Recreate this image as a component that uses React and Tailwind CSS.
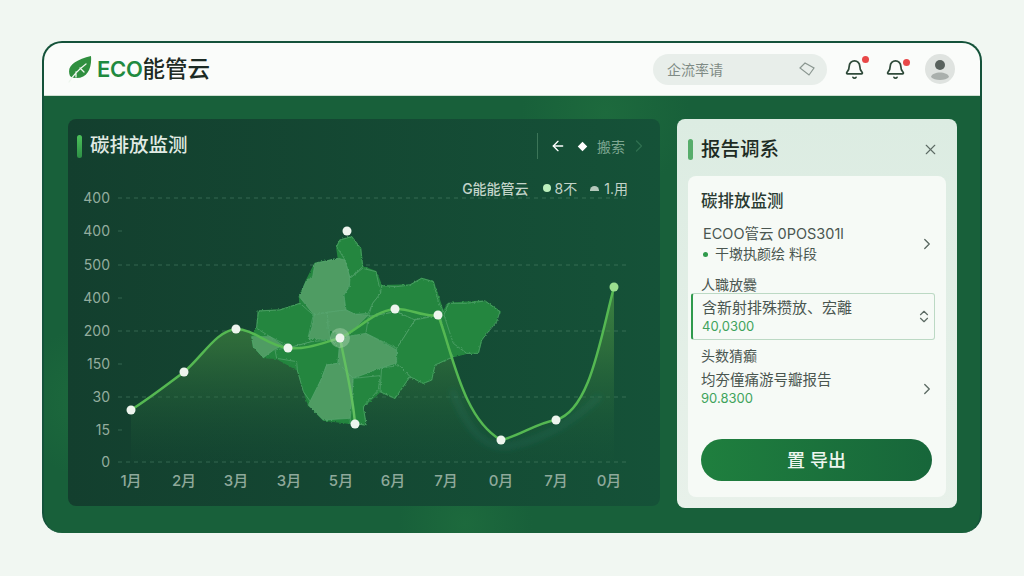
import { Bell, ChevronRight, ChevronUp, ChevronDown, X, ArrowLeft } from "lucide-react";

const cjk = "font-['Inter','Noto_Sans_CJK_SC',sans-serif]";

const yLabels = [
  ["400", 198, true],
  ["400", 231, false],
  ["500", 265, true],
  ["400", 298, false],
  ["200", 331, true],
  ["150", 364, false],
  ["30", 397, true],
  ["15", 430, false],
  ["0", 462, true],
];

const xLabels = [
  ["1月", 131],
  ["2月", 184],
  ["3月", 236],
  ["3月", 289],
  ["5月", 341],
  ["6月", 393],
  ["7月", 446],
  ["0月", 501],
  ["7月", 556],
  ["0月", 609],
];

// whole map outline, goes under the regions so no holes show between them
const mapOutline =
  "300,75 335,65 362,100 368,155 408,170 425,212 510,210 545,190 580,200 610,290 625,265 735,258 780,290 725,375 715,415 680,415 640,425 585,450 575,495 550,505 510,485 465,550 420,530 370,575 378,630 330,625 250,615 205,570 172,465 110,430 70,428 40,395 35,365 50,340 55,288 120,285 180,265 178,245 200,195 225,145 295,130 290,95";

// map regions, coordinates are 3x and get scaled down by the group transform
const regions = [
  ["d", "300,75 335,65 362,100 368,155 330,190 315,135 290,95"],
  ["l", "225,145 295,130 315,135 330,190 328,215 312,240 318,285 262,292 222,300 178,245 200,195 218,185"],
  ["d", "330,190 368,160 408,170 422,235 398,265 385,295 345,298 318,285 312,240 328,215"],
  ["d", "425,212 470,215 510,210 545,190 580,200 595,260 610,290 585,300 520,315 470,290 385,305 398,265 422,235"],
  ["d", "55,288 120,285 180,265 220,300 205,365 215,380 160,395 130,385 90,365 50,340"],
  ["l", "35,365 90,365 130,392 105,402 70,428 40,395"],
  ["d", "105,405 160,395 215,380 272,375 298,400 293,445 260,450 245,490 215,565 190,530 172,465 170,440 110,430"],
  ["l", "222,300 262,292 265,340 272,375 205,370 218,330"],
  ["l", "262,292 318,285 345,298 385,300 340,345 320,365 275,350 265,340"],
  ["l", "320,365 378,355 470,405 468,445 425,458 340,490 295,445 298,400"],
  ["d", "385,305 470,290 525,315 490,370 470,400 378,355"],
  ["d", "525,315 600,300 625,400 640,425 585,450 575,495 550,505 510,485 470,445 470,400 490,370"],
  ["d", "625,265 680,265 735,258 780,290 770,320 725,375 715,415 680,415 640,385 612,300"],
  ["d", "425,458 480,452 510,485 465,550 420,530"],
  ["l", "260,450 295,445 340,490 330,610 250,615 205,570 245,490"],
  ["d", "340,490 420,482 415,525 370,575 378,630 330,625"],
];

const linePath =
  "M131 410 C150 398 168 384 184 372 C203 356 216 331 236 329 C254 329 268 346 288 348 C306 350 322 343 340 338 C358 330 374 311 395 309 C410 308 424 318 438 315 C452 350 462 418 501 440 C520 436 536 423 556 420 C590 410 600 340 614 287";
const areaPath = linePath + " L614 462 L131 462 Z";

function Leaf() {
  return (
    <svg width="26" height="28" viewBox="0 0 26 28" className="mr-[3px]">
      <path d="M3 21 C-1 11 8 5 24 1 C25 12 21 24 8 23 C6 23 4 22 3 21 Z" fill="#2f8f3f" />
      <path d="M2 27 C7 19 11 15 19 9 M9 17 L9 22 M13 13 L17 17" stroke="#eef6ee" strokeWidth="1.3" fill="none" strokeLinecap="round" />
    </svg>
  );
}

function NotifyBell({ dotClass }) {
  return (
    <div className="relative w-[21px] h-[21px]">
      <Bell size={21} strokeWidth={2} className="text-[#2f4a3a]" />
      <span className={`absolute w-[7px] h-[7px] rounded-full bg-[#e84848] ${dotClass}`} />
    </div>
  );
}

function Avatar() {
  return (
    <svg width="30" height="30" viewBox="0 0 30 30">
      <circle cx="15" cy="15" r="15" fill="#dfe3e0" />
      <circle cx="15" cy="11" r="5" fill="#59625e" />
      <path d="M6 23 C7 17 23 17 24 23 C21 27 9 27 6 23 Z" fill="#a9afac" />
    </svg>
  );
}

function Chart() {
  return (
    <svg width="592" height="310" viewBox="68 196 592 310" className="block overflow-visible">
      <defs>
        <linearGradient id="area" x1="0" y1="0" x2="0" y2="1">
          <stop offset="0" stopColor="#4f9a45" stopOpacity="0.7" />
          <stop offset="0.35" stopColor="#3c7f3f" stopOpacity="0.6" />
          <stop offset="1" stopColor="#1a5a38" stopOpacity="0.05" />
        </linearGradient>
        <filter id="rough" x="-5%" y="-5%" width="110%" height="110%" colorInterpolationFilters="sRGB">
          <feTurbulence type="fractalNoise" baseFrequency="0.14" numOctaves="2" seed="4" />
          <feDisplacementMap in="SourceGraphic" scale="8" xChannelSelector="R" yChannelSelector="G" />
        </filter>
        <filter id="soft" x="-20%" y="-20%" width="140%" height="140%">
          <feGaussianBlur stdDeviation="3" />
        </filter>
      </defs>

      {yLabels.map(([label, y, full], i) => (
        <g key={i}>
          <text x="110" y={y + 5} textAnchor="end" fontSize="14" fill="#93ad9e" fontFamily="Inter, sans-serif">
            {label}
          </text>
          <line x1="118" x2={full ? 630 : 123} y1={y} y2={y} stroke="#5f9277" strokeOpacity="0.45" strokeDasharray="4 4" />
        </g>
      ))}

      <path d={areaPath} fill="url(#area)" />
      <path d="M452 390 C466 425 482 450 510 446 C540 440 570 425 600 396" fill="none" stroke="#2b7f78" strokeOpacity="0.25" strokeWidth="5" filter="url(#soft)" />

      <g transform="translate(240 215) scale(0.3333)">
        <g filter="url(#rough)">
          <polygon points={mapOutline} fill="#24863f" stroke="#24863f" strokeWidth="4" strokeLinejoin="round" />
          {regions.map(([kind, pts], i) => (
            <polygon key={i} points={pts} fill={kind === "d" ? "#24863f" : "#4f9c63"} stroke="#5aa873" strokeWidth="2" />
          ))}
        </g>
      </g>

      <path d={linePath} fill="none" stroke="#55b852" strokeWidth="2.5" strokeLinecap="round" />
      <path d="M340 338 C345 365 353 395 355 424" fill="none" stroke="#62c060" strokeWidth="2.5" />

      <circle cx="340" cy="338" r="10" fill="#a8d4ae" fillOpacity="0.45" />
      {[
        [131, 410],
        [184, 372],
        [236, 329],
        [288, 348],
        [340, 338],
        [395, 309],
        [438, 315],
        [347, 231],
        [355, 424],
        [501, 440],
        [556, 420],
      ].map(([cx, cy], i) => (
        <circle key={i} cx={cx} cy={cy} r="4.5" fill="#eef5ee" />
      ))}
      <circle cx="614" cy="287" r="4.5" fill="#9be08f" />

      {xLabels.map(([label, x], i) => (
        <text key={i} x={x} y="486" textAnchor="middle" fontSize="15" fontWeight="500" fill="#8fa99b" fontFamily="Inter, 'Noto Sans CJK SC', sans-serif">
          {label}
        </text>
      ))}
    </svg>
  );
}

export default function App() {
  return (
    <div className={`w-[1024px] h-[576px] bg-[#f1f7f2] pt-[41px] pl-[42px] overflow-hidden ${cjk}`}>
      <div className="w-[940px] h-[492px] rounded-[20px] overflow-hidden flex flex-col border-t-2 border-x-2 border-[#14523a] bg-[#18603a]">
        {/* top bar */}
        <header className="h-[53px] shrink-0 bg-[#fafcfa] flex items-center pl-[23px] pr-[25px] border-b border-[#cfe0d3]">
          <Leaf />
          <span className="ml-[1px] text-[22px] font-semibold text-[#1f8a3f] tracking-[-0.3px]">ECO</span>
          <span className="text-[22.5px] font-medium text-[#1d2b24]">能管云</span>
          <div className="ml-auto flex items-center">
            <div className="w-[174px] h-[31px] rounded-full bg-[#e8eeea] flex items-center justify-between pl-[14px] pr-[12px] text-[14px] text-[#7f8b85]">
              <span>企流率请</span>
              <svg width="16" height="16" viewBox="0 0 16 16" fill="none" stroke="#8b9791" strokeWidth="1.2">
                <path d="M1 7 L6 2 L15 7 L10 14 Z" />
              </svg>
            </div>
            <div className="ml-[17px]"><NotifyBell dotClass="-top-[3px] right-[-4px]" /></div>
            <div className="ml-[20px]"><NotifyBell dotClass="top-0 right-[-4px]" /></div>
            <div className="ml-[19px]"><Avatar /></div>
          </div>
        </header>

        {/* body */}
        <main className="flex-1 flex gap-[17px] pt-[23px] pl-[24px] bg-[radial-gradient(circle_at_5%_70%,#1d6a3d_0,transparent_8%),radial-gradient(circle_at_45%_98%,#1d6a3d_0,transparent_10%),radial-gradient(circle_at_60%_4%,#1d6a3d_0,transparent_12%)]">
          {/* chart panel */}
          <section className="w-[592px] h-[387px] rounded-lg bg-gradient-to-r from-[#133f2e] to-[#155238] flex flex-col">
            <div className="h-[54px] shrink-0 flex items-center pl-[9px] pr-[11px]">
              <span className="w-[5px] h-[23px] rounded-sm bg-gradient-to-b from-[#4cc25a] to-[#2d8f46]" />
              <h2 className="ml-[8px] text-[19.5px] font-medium text-[#e1ebe4]">碳排放监测</h2>
              <div className="ml-auto flex items-center text-white">
                <span className="w-px h-[26px] bg-[#3c7558] mr-[12px]" />
                <ArrowLeft size={16} strokeWidth={2} />
                <span className="ml-[12px] w-[9px] h-[9px] bg-white rotate-45 scale-75" />
                <span className="ml-[10px] text-[14px] text-[#7ea792]">搬索</span>
                <ChevronRight size={20} strokeWidth={1.5} className="ml-[4px] text-[#2f6f50]" />
              </div>
            </div>
            <div className="h-[23px] shrink-0 pt-[7px] flex items-center justify-end pr-[32px] text-[14px] text-[#c3d4c9]">
              <span className="font-medium">G能能管云</span>
              <span className="ml-[14px] w-[8px] h-[8px] rounded-full bg-[#bdf0bd]" />
              <span className="ml-[4px]">8不</span>
              <span className="ml-[13px] w-[9px] h-[5px] rounded-t-full bg-[#b5c9bc]" />
              <span className="ml-[5px]">1.用</span>
            </div>
            <Chart />
          </section>

          {/* report panel */}
          <aside className="w-[280px] h-[389px] rounded-lg bg-gradient-to-b from-[#dcece2] to-[#e8f1ea] flex flex-col px-[11px] pb-[11px]">
            <div className="h-[57px] shrink-0 pt-[4px] flex items-center pr-[7px]">
              <span className="w-[5px] h-[21px] rounded-sm bg-[#57ad6b]" />
              <h2 className="ml-[8px] text-[19.5px] font-medium text-[#1d2b24]">报告调系</h2>
              <X size={17} strokeWidth={1.6} className="ml-auto text-[#5d6b64]" />
            </div>
            <div className="flex-1 rounded-lg bg-[#f6faf6] pl-[13px] pr-[14px] pt-[14px] flex flex-col text-[14px] text-[#4a5650]">
              <h3 className="h-[22px] leading-[22px] text-[16.5px] font-medium text-[#2a3a32]">碳排放监测</h3>
              <div className="mt-[12px] flex items-center justify-between">
                <div>
                  <p className="h-[20px] leading-[20px] text-[14.5px] pl-[2px]">ECOO管云 0POS301l</p>
                  <p className="h-[20px] leading-[20px] flex items-center text-[14px]">
                    <span className="ml-[2px] w-[5px] h-[5px] rounded-full bg-[#2f9a4c] mr-[7px]" />
                    干墩执颜绘 料段
                  </p>
                </div>
                <ChevronRight size={18} strokeWidth={1.8} className="text-[#5d6b64] mr-[-4px]" />
              </div>
              <p className="mt-[11px] h-[20px] leading-[20px]">人職放爨</p>
              <div className="mt-[-2px] ml-[-10px] mr-[-3px] h-[47px] shrink-0 rounded-[3px] border border-[#bcd9c4] border-l-2 border-l-[#2f9a4c] pl-[9px] pr-[3px] flex items-center justify-between">
                <div>
                  <p className="h-[19px] leading-[19px] text-[15px]">含新射排殊攒放、宏離</p>
                  <p className="h-[18px] leading-[18px] text-[13px] text-[#3fa35c]">40,0300</p>
                </div>
                <div className="flex flex-col items-center text-[#5d6b64]">
                  <ChevronUp size={14} strokeWidth={2} className="mb-[-7px]" />
                  <ChevronDown size={14} strokeWidth={2} />
                </div>
              </div>
              <p className="mt-[6px] h-[20px] leading-[20px]">头数猜癫</p>
              <div className="mt-[4px] flex items-center justify-between">
                <div>
                  <p className="h-[19px] leading-[19px] text-[14.5px]">均夯僮痛游号瓣报告</p>
                  <p className="h-[18px] leading-[18px] text-[13px] text-[#3fa35c]">90.8300</p>
                </div>
                <ChevronRight size={18} strokeWidth={1.8} className="text-[#5d6b64] mr-[-4px]" />
              </div>
              <button className="mt-[32px] h-[42px] shrink-0 rounded-full bg-gradient-to-r from-[#1f7f3e] to-[#17663a] text-[#eef6ef] text-[18px] font-medium">
                置 导出
              </button>
            </div>
          </aside>
        </main>
      </div>
    </div>
  );
}
